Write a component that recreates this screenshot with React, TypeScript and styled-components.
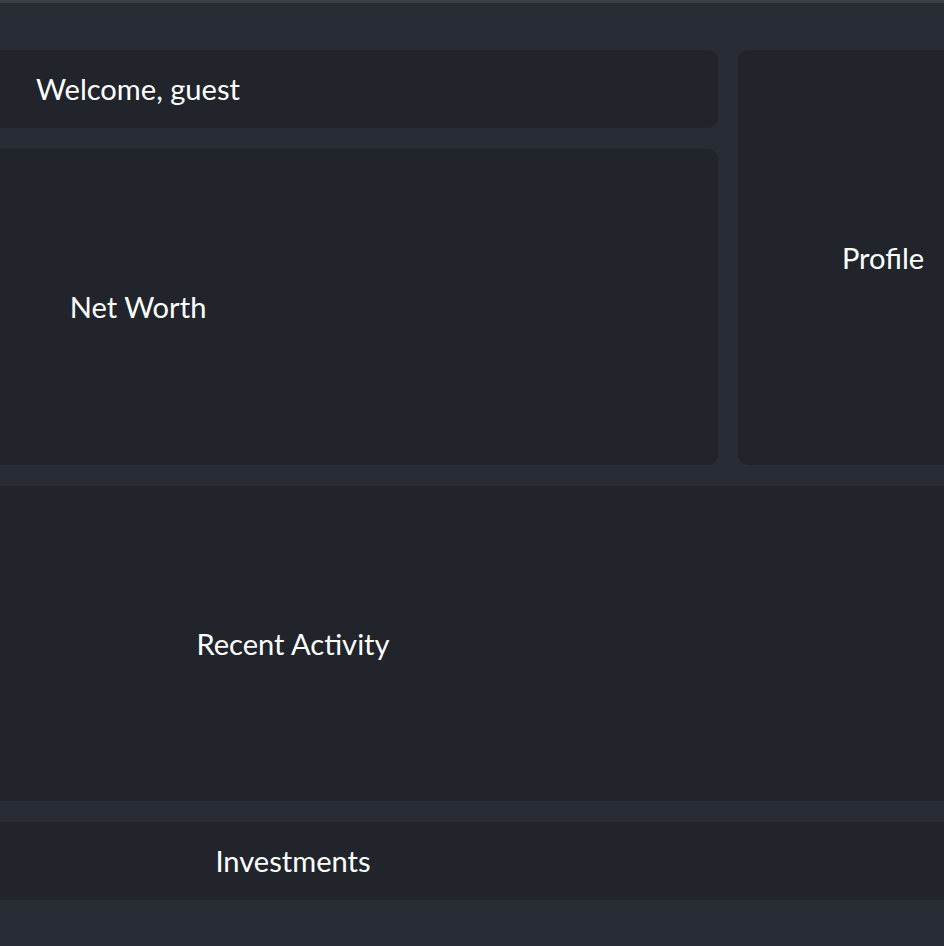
import React from "react";
import styled, { createGlobalStyle } from "styled-components";

const Global = createGlobalStyle`
  html, body {
    margin: 0;
    padding: 0;
    background: #282c34;
    overflow: hidden;
  }
  body {
    font-family: Lato, "Open Sans", sans-serif;
    color: #ffffff;
    border-top: 3px solid #3b3e44;
    min-height: 943px;
  }
`;

const Dashboard = styled.main`
  width: 1470px;
  margin: 47px 0 0 -442px;
  display: grid;
  grid-template-columns: 1160px 290px;
  grid-template-rows: 78px 316px 315px 78px;
  column-gap: 20px;
  row-gap: 21px;
`;

const Panel = styled.section<{ $col: string; $row: string }>`
  grid-column: ${(p) => p.$col};
  grid-row: ${(p) => p.$row};
  background: #21252b;
  border-radius: 10px;
  display: flex;
  align-items: center;
  justify-content: center;
  font-size: 29.1px;
  font-weight: 400;
  line-height: 1.2;
  padding-top: 1px;
  box-sizing: border-box;
`;

export default function App() {
  return (
    <>
      <Global />
      <Dashboard>
        <Panel $col="1" $row="1">Welcome, guest</Panel>
        <Panel $col="1" $row="2">Net Worth</Panel>
        <Panel $col="2" $row="1 / span 2">Profile</Panel>
        <Panel $col="1 / span 2" $row="3">Recent Activity</Panel>
        <Panel $col="1 / span 2" $row="4">Investments</Panel>
      </Dashboard>
    </>
  );
}
